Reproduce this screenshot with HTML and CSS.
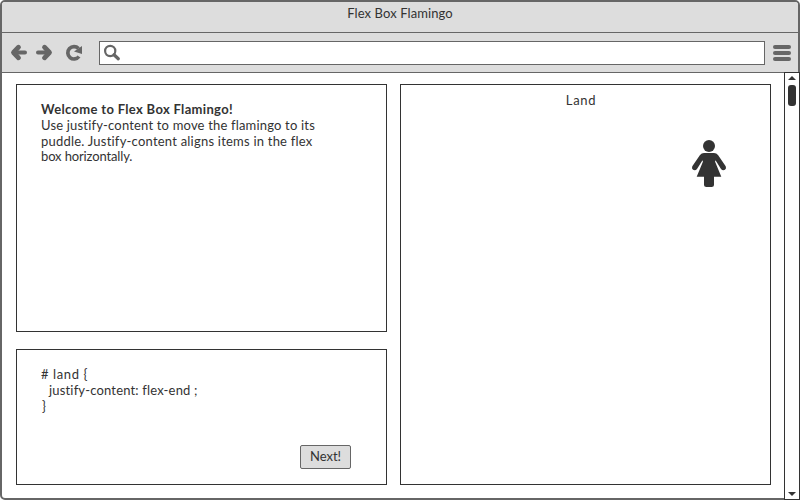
FILE: index.html
```html
<!DOCTYPE html>
<html lang="en">
<head>
<meta charset="utf-8">
<title>Flex Box Flamingo</title>
<link rel="stylesheet" href="styles.css">
</head>
<body>
<div class="window">
  <header class="titlebar"><span class="title">Flex Box Flamingo</span></header>
  <nav class="toolbar">
    <svg class="nav-icons" width="97" height="38" viewBox="2 33 97 38" fill="none" stroke="#666" stroke-width="4" stroke-linecap="round" stroke-linejoin="round">
      <path d="M18.500 47.200L13.500 52.500L18.500 57.800" stroke-width="4.800"/>
      <path d="M14 52.500H25"/>
      <path d="M44.500 47.200L49.500 52.500L44.500 57.800" stroke-width="4.800"/>
      <path d="M49 52.500H38"/>
      <path d="M78.500 48.500A6.200 6.200 0 1 0 79 56.500" stroke-width="3.700" stroke-linecap="butt"/>
      <path d="M82 46V54L74 51.500Z" fill="#666" stroke="none"/>
    </svg>
    <div class="address">
      <svg width="20" height="20" viewBox="102 43 20 20" fill="none" stroke="#666">
        <circle cx="110.200" cy="51" r="5.100" stroke-width="2.200"/>
        <path d="M114 54.800L118.300 58.700" stroke-width="3.300" stroke-linecap="round"/>
      </svg>
    </div>
    <div class="menu"><i></i><i></i><i></i></div>
  </nav>
  <div class="content">
    <main class="panels">
      <section class="panel lesson">
        <h1 class="line heading">Welcome to Flex Box Flamingo!</h1>
        <div class="line l1">Use justify-content to move the flamingo to its</div>
        <div class="line l2">puddle. Justify-content aligns items in the flex</div>
        <div class="line l3">box horizontally.</div>
      </section>
      <section class="panel editor">
        <div class="line c1"># land {</div>
        <div class="line c2">justify-content: flex-end ;</div>
        <div class="line c3">}</div>
        <button class="next">Next!</button>
      </section>
      <section class="panel land">
        <div class="land-title">Land</div>
        <svg class="person" width="36" height="50" viewBox="691 139 36 50" fill="#333">
          <circle cx="709" cy="146" r="6"/>
          <path d="M704 153H714Q716.500 153 718 155L725.700 166.300Q726.700 168.500 725 169.800Q722.700 171 721 169L716.300 161.500Q714.700 159.500 715.200 162L721.300 176.800H714V184.500Q714 187 711.500 187H706.500Q704 187 704 184.500V176.800H696.700L702.800 162Q703.300 159.500 701.700 161.500L697 169Q695.300 171 693 169.800Q691.300 168.500 692.300 166.300L700 155Q701.500 153 704 153Z"/>
        </svg>
      </section>
    </main>
    <div class="scrollbar">
      <svg width="8" height="4" viewBox="0 0 8 4"><path d="M0 4L4 0L8 4Z"/></svg>
      <div class="thumb"></div>
      <svg class="down" width="8" height="4" viewBox="0 0 8 4"><path d="M0 0H8L4 4Z"/></svg>
    </div>
  </div>
</div>
</body>
</html>
```
FILE: styles.css
```css
* { box-sizing: border-box; }
body {
  margin: 0;
  background: #fff;
  color: #333;
  font: 13px/16px Lato, "Liberation Sans", sans-serif;
}
svg { display: block; flex: none; }
.window {
  width: 800px;
  height: 500px;
  border: 2px solid #666;
  border-radius: 5px;
  display: flex;
  flex-direction: column;
}
.titlebar {
  height: 31px;
  flex: none;
  background: #ddd;
  border-bottom: 1px solid #666;
  border-radius: 3px 3px 0 0;
  text-align: center;
  padding-top: 3px;
}
.title { letter-spacing: 0.1px; }
.toolbar {
  height: 40px;
  flex: none;
  background: #ddd;
  border-bottom: 1px solid #666;
  display: flex;
}
.address {
  width: 666px;
  height: 24px;
  margin-top: 8px;
  padding: 1px 2px;
  background: #fff;
  border: 1px solid #666;
}
.menu {
  margin: 12px 0 0 8px;
  display: grid;
  gap: 2px;
  align-content: start;
}
.menu i { width: 18px; height: 4px; border-radius: 2px; background: #666; }
.content { flex: 1; display: flex; min-height: 0; }
.panels {
  width: 782px;
  padding: 11px 0 0 14px;
  display: grid;
  grid-template-columns: 371px 371px;
  grid-template-rows: 248px 136px;
  column-gap: 13px;
  row-gap: 17px;
}
.panel { border: 1px solid #333; background: #fff; }
.lesson { padding: 17px 24px; }
.editor { padding: 16px 24px 0; display: flex; flex-direction: column; }
.land { grid-column: 2; grid-row: 1 / 3; padding-top: 7px; }
.line {
  margin: 0;
  font-size: 13px;
  line-height: 15.8px;
  white-space: pre;
  font-variant-ligatures: none;
}
.editor .line { line-height: 16px; }
.heading { font-weight: 700; letter-spacing: 0.33px; }
.l1 { letter-spacing: 0.18px; }
.l2 { letter-spacing: 0.22px; }
.l3 { letter-spacing: -0.13px; }
.c1 { letter-spacing: 0.6px; }
.c2 { padding-left: 8px; letter-spacing: 0.17px; }
.c3 { padding-left: 1px; }
.next {
  width: 51px;
  height: 24px;
  flex: none;
  margin: 31px 0 0 259px;
  padding: 0 0 2px;
  border: 1px solid #666;
  border-radius: 2px;
  background: #ddd;
  color: #333;
  font: inherit;
}
.land-title { text-align: center; padding-right: 9px; letter-spacing: 0.7px; }
.person { margin: 31px 0 0 290px; }
.scrollbar {
  width: 16px;
  height: 428px;
  margin: -1px -2px 0 0;
  flex: none;
  border: 1px solid #333;
  background: #fff;
  display: flex;
  flex-direction: column;
  align-items: center;
  padding: 3px 0;
}
.scrollbar path { fill: #333; }
.thumb { width: 8px; height: 21px; margin-top: 5px; border-radius: 3px; background: #333; }
.down { margin-top: auto; }
```
